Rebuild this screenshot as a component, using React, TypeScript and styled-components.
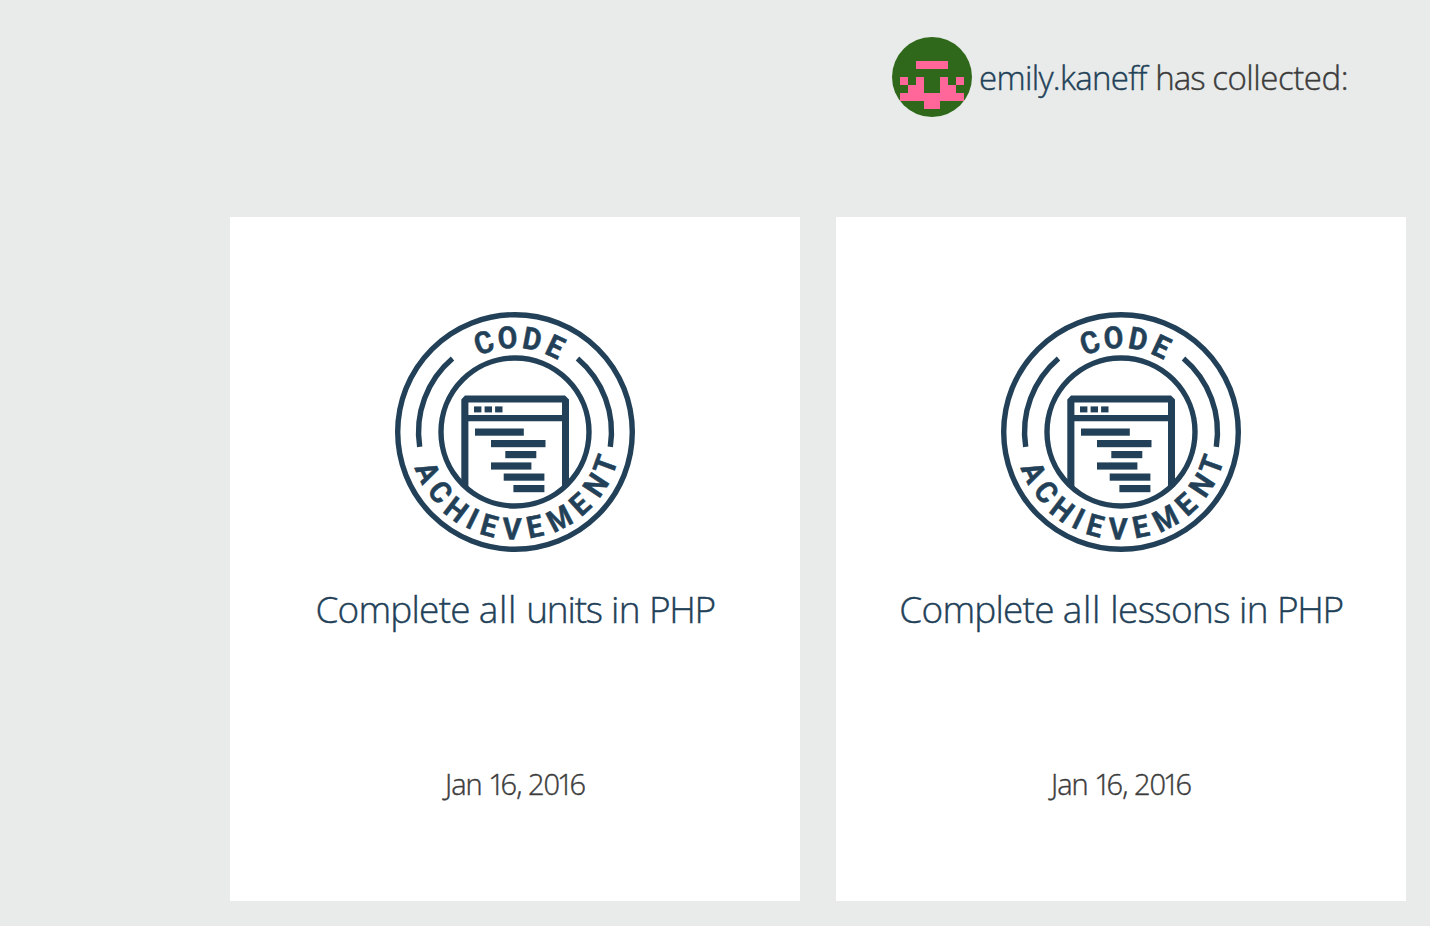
import React from "react";
import styled, { createGlobalStyle } from "styled-components";

const ink = "#224158";

const GlobalStyle = createGlobalStyle`
  * { box-sizing: border-box; }
  body {
    margin: 0;
    background: #e8ebe9;
    color: #3c3b3b;
    font-family: "Open Sans", "Noto Sans", sans-serif;
    font-weight: 300;
    -webkit-text-stroke-width: 0.4px;
  }
`;

const Page = styled.main`
  width: 1430px;
  height: 926px;
  overflow: hidden;
  padding: 37px 24px 0 230px;
`;

const Header = styled.header`
  display: flex;
  align-items: center;
  height: 80px;
  padding-left: 662px;
  margin-bottom: 100px;
`;

const Avatar = styled.svg`
  width: 80px;
  height: 80px;
  border-radius: 50%;
  flex: none;
`;

const Heading = styled.h1`
  margin: 2px 0 0 7px;
  font-size: 33px;
  line-height: 46px;
  font-weight: inherit;
  white-space: nowrap;
`;

const Run = styled.span<{ $spacing: number }>`
  letter-spacing: ${(p) => p.$spacing}px;
`;

const UserName = styled(Run)`
  color: ${ink};
`;

const Cards = styled.section`
  display: flex;
  gap: 36px;
`;

const Card = styled.article`
  display: flex;
  flex-direction: column;
  align-items: center;
  width: 570px;
  height: 684px;
  padding-top: 95px;
  background: #fff;
`;

const Badge = styled.svg`
  display: block;
  width: 240px;
  height: 240px;
  flex: none;
`;

const Letter = styled.text`
  font-family: Roboto, sans-serif;
  font-weight: 700;
  font-size: 30px;
  text-anchor: middle;
  fill: ${ink};
  stroke: ${ink};
  stroke-width: 0.5px;
`;

const Title = styled.h2`
  margin: 31px 0 0;
  font-size: 37px;
  line-height: 52px;
  font-weight: inherit;
  color: ${ink};
  white-space: nowrap;
  letter-spacing: -0.6px;
`;

const DateText = styled.time`
  margin-top: 129px;
  font-size: 29px;
  line-height: 40px;
`;

const cells: [number, number, number][] = [
  [3, 3, 4],
  [1, 5, 1], [3, 5, 1], [6, 5, 1], [8, 5, 1],
  [2, 6, 2], [6, 6, 2],
  [1, 7, 8],
  [4, 8, 2],
];

const topLetters: [string, number, number][] = [
  ["C", -19.3, 95], ["O", -4.5, 95], ["D", 10.6, 95], ["E", 25.3, 94.5],
];

const bottomLetters: [string, number, number][] = [
  ["A", 65.2, 95.8], ["C", 51.2, 95.6], ["H", 37.2, 97], ["I", 26, 96.5],
  ["E", 15.4, 96.8], ["V", 1.8, 96.5], ["E", -11.8, 96.3], ["M", -27.2, 97],
  ["E", -42, 96.8], ["N", -56.7, 96.3], ["T", -70, 95.8],
];

const codeLines: [number, number, number][] = [
  [80, 116.5, 48.8], [96, 128, 54.5], [110.3, 139, 31],
  [96, 150.4, 40.4], [108.7, 161.5, 40.7], [118.4, 173, 31],
];

function CodeBadge() {
  return (
    <Badge viewBox="0 0 240 240" role="img" aria-label="Code achievement">
      <g fill="none" stroke={ink} strokeWidth="5.4">
        <circle cx="120" cy="120" r="117.3" />
        <circle cx="120" cy="120" r="74" />
        <path d="M57.5 46.5A96.4 96.4 0 0 0 24.7 134.8" />
        <path d="M182.5 46.5A96.4 96.4 0 0 1 215.3 134.8" />
      </g>
      <path
        fill={ink}
        fillRule="evenodd"
        d="M70 83.4H170L174 87.4V174L167 180V109.3H73.4V180L66.3 174V87.4ZM73.4 90.5V103H167V90.5Z"
      />
      <g fill={ink}>
        {[79, 89.6, 100.1].map((x) => (
          <rect key={x} x={x} y="94.4" width="7.4" height="6" />
        ))}
        {codeLines.map(([x, y, w]) => (
          <rect key={y} x={x} y={y} width={w} height="7.2" />
        ))}
      </g>
      {topLetters.map(([c, a, r], i) => (
        <Letter key={i} y="10.8" transform={`translate(120 120) rotate(${a}) translate(0 ${-r}) scale(.95 1.02)`}>{c}</Letter>
      ))}
      {bottomLetters.map(([c, a, r], i) => (
        <Letter key={i} y="10.8" transform={`translate(120 120) rotate(${a}) translate(0 ${r}) scale(${c === "M" ? 0.9 : 0.96} 1)`}>{c}</Letter>
      ))}
    </Badge>
  );
}

const achievements = [
  { title: "Complete all units in PHP", date: "Jan 16, 2016" },
  { title: "Complete all lessons in PHP", date: "Jan 16, 2016" },
];

const wordSpacing: Record<string, number> = {
  Complete: -0.8,
  all: 0.7,
  units: -1.2,
  PHP: -1.4,
};

function KernedTitle({ value }: { value: string }) {
  return (
    <Title>
      {value.split(" ").map((word, i) => (
        <React.Fragment key={i}>
          {i > 0 && " "}
          <Run $spacing={wordSpacing[word] ?? -0.6}>{word}</Run>
        </React.Fragment>
      ))}
    </Title>
  );
}

/* The digit 1 sits tighter than the other figures. */
function KernedDate({ value }: { value: string }) {
  return (
    <DateText>
      {value.split(/(01|1)/).map((part, i) => {
        if (part === "01") {
          return (
            <React.Fragment key={i}>
              <Run $spacing={-3}>0</Run>
              <Run $spacing={-4.2}>1</Run>
            </React.Fragment>
          );
        }
        return <Run key={i} $spacing={part === "1" ? -4.2 : -1}>{part}</Run>;
      })}
    </DateText>
  );
}

export default function App() {
  return (
    <>
      <GlobalStyle />
      <Page>
        <Header>
          <Avatar viewBox="0 0 10 10" shapeRendering="crispEdges">
            <rect width="10" height="10" fill="#2f681b" />
            {cells.map(([x, y, w]) => (
              <rect key={`${x}-${y}`} x={x} y={y} width={w} height="1" fill="#ff6699" />
            ))}
          </Avatar>
          <Heading>
            <UserName $spacing={-0.7}>emily.kaneff</UserName>{" "}
            <Run $spacing={-1}>has </Run>
            <Run $spacing={-0.45}>collected:</Run>
          </Heading>
        </Header>
        <Cards>
          {achievements.map((a) => (
            <Card key={a.title}>
              <CodeBadge />
              <KernedTitle value={a.title} />
              <KernedDate value={a.date} />
            </Card>
          ))}
        </Cards>
      </Page>
    </>
  );
}
